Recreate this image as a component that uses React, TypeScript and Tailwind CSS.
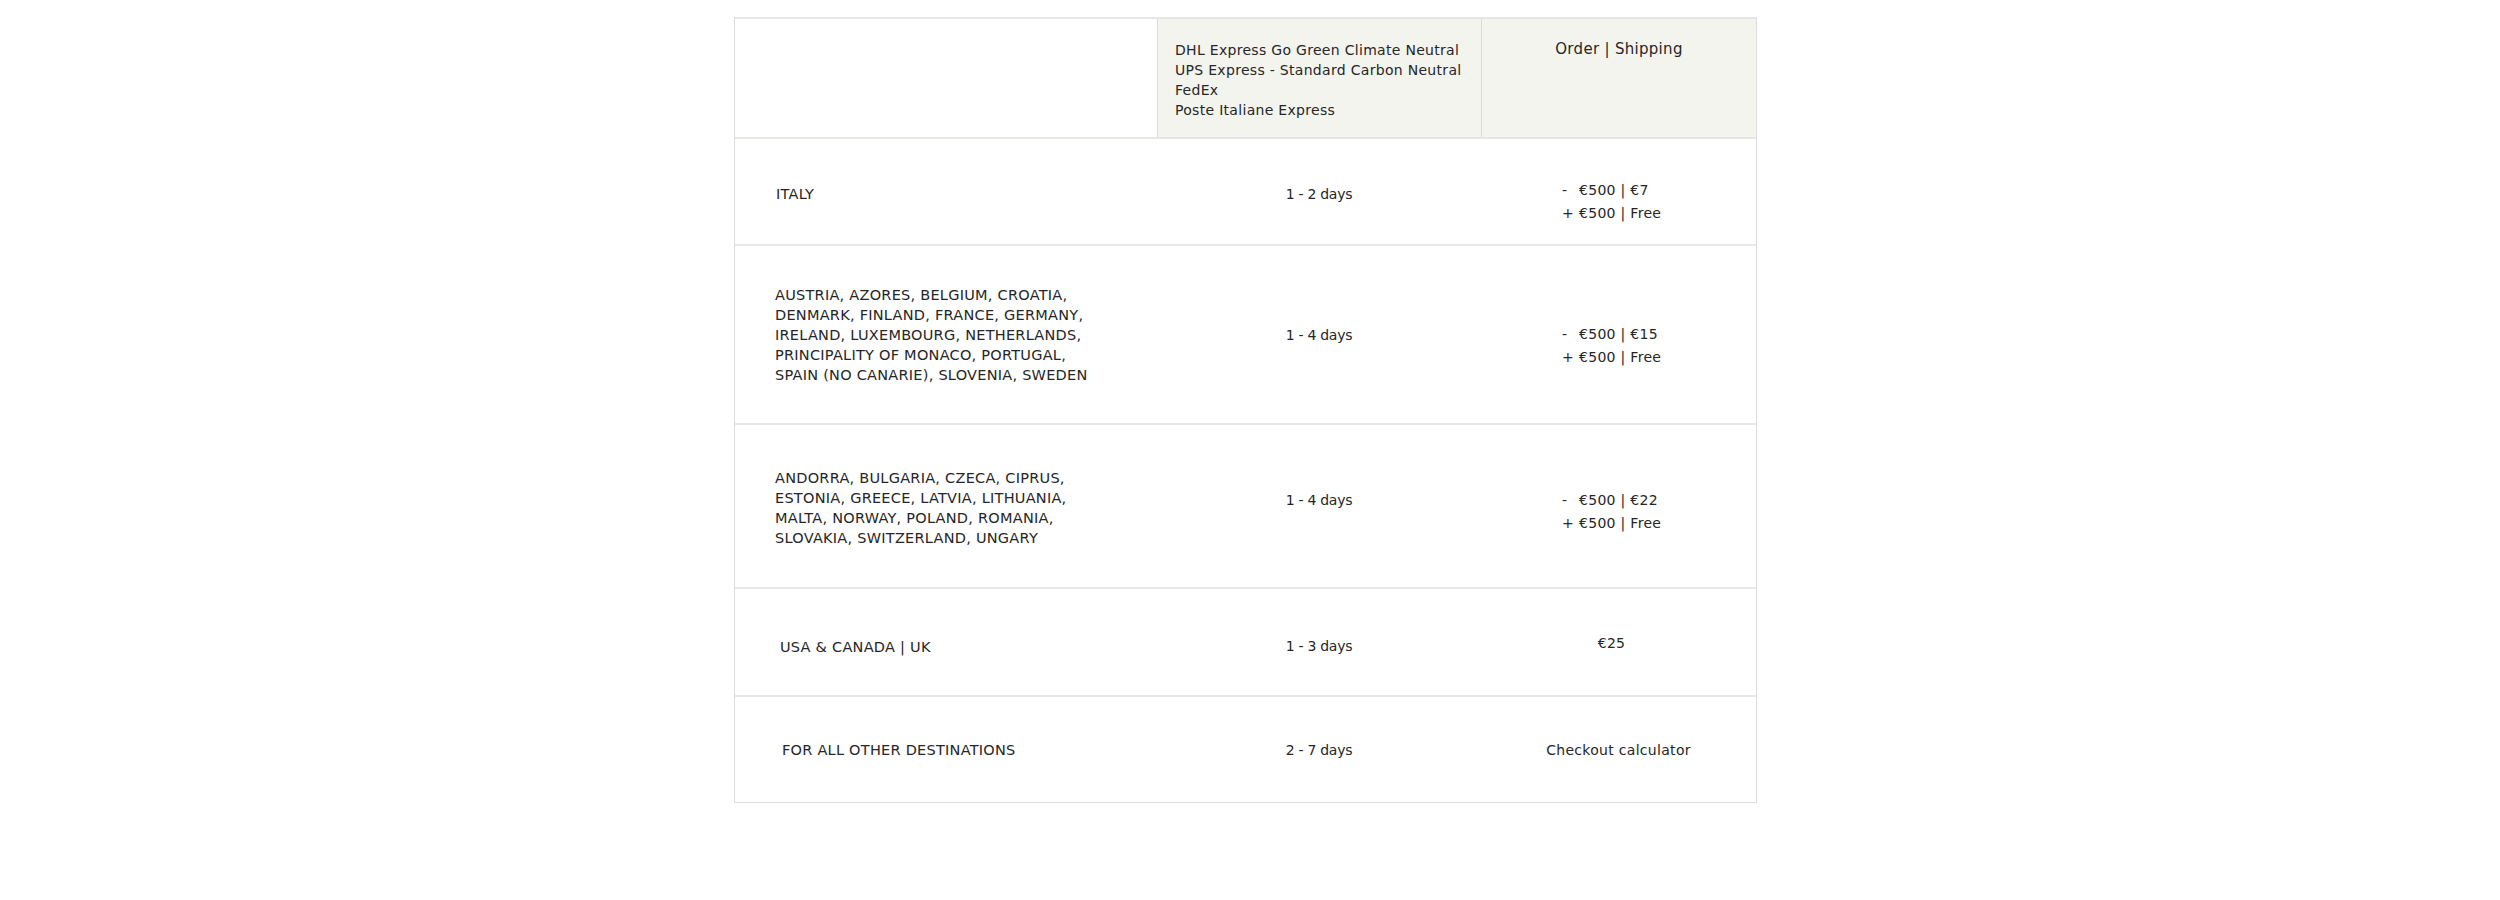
import type { ReactNode } from "react";

type Row = {
  h: string;
  dest: ReactNode;
  destCls: string;
  days: string;
  daysCls: string;
  cost: ReactNode;
  costCls: string;
  last?: boolean;
};

function Tier({ low }: { low: string }) {
  return (
    <div className="leading-[23px]">
      <div>
        <span className="inline-block w-[17px]">-</span>€500 | {low}
      </div>
      <div>
        <span className="inline-block w-[17px]">+</span>€500 | Free
      </div>
    </div>
  );
}

const ROWS: Row[] = [
  {
    h: "h-[107px]",
    dest: "ITALY",
    destCls: "pl-[41px] pt-[5px]",
    days: "1 - 2 days",
    daysCls: "pt-[5px]",
    cost: <Tier low="€7" />,
    costCls: "pl-[81px] pt-[20px]",
  },
  {
    h: "h-[179px]",
    dest: (
      <>
        AUSTRIA, AZORES, BELGIUM, CROATIA,
        <br />
        DENMARK, FINLAND, FRANCE, GERMANY,
        <br />
        IRELAND, LUXEMBOURG, NETHERLANDS,
        <br />
        PRINCIPALITY OF MONACO, PORTUGAL,
        <br />
        SPAIN (NO CANARIE), SLOVENIA, SWEDEN
      </>
    ),
    destCls: "pl-[40px]",
    days: "1 - 4 days",
    daysCls: "",
    cost: <Tier low="€15" />,
    costCls: "pl-[81px] pt-[22px]",
  },
  {
    h: "h-[164px]",
    dest: (
      <>
        ANDORRA, BULGARIA, CZECA, CIPRUS,
        <br />
        ESTONIA, GREECE, LATVIA, LITHUANIA,
        <br />
        MALTA, NORWAY, POLAND, ROMANIA,
        <br />
        SLOVAKIA, SWITZERLAND, UNGARY
      </>
    ),
    destCls: "pl-[40px] pt-[4px]",
    days: "1 - 4 days",
    daysCls: "pb-[13px]",
    cost: <Tier low="€22" />,
    costCls: "pl-[81px] pt-[11px]",
  },
  {
    h: "h-[108px]",
    dest: "USA & CANADA | UK",
    destCls: "pl-[45px] pt-[10px]",
    days: "1 - 3 days",
    daysCls: "pt-[8px]",
    cost: "€25",
    costCls: "justify-center pr-[14px] pt-[2px]",
  },
  {
    h: "h-[105px]",
    dest: "FOR ALL OTHER DESTINATIONS",
    destCls: "pl-[47px]",
    days: "2 - 7 days",
    daysCls: "",
    cost: "Checkout calculator",
    costCls: "justify-center",
    last: true,
  },
];

export default function App() {
  return (
    <div className="min-h-[900px] bg-white pt-[17px] font-['DejaVu_Sans',sans-serif] text-[14px] leading-[20px] tracking-[0.3px] text-[#262626]">
      <div className="ml-[734px] w-[1023px] border-x border-t-2 border-b border-x-[#dcdcdc] border-t-[#e6e6e6] border-b-[#dcdcdc]">
        {/* header */}
        <div className="flex h-[120px] border-b-2 border-[#e6e6e3]">
          <div className="w-[422px] bg-white" />
          <div className="w-[324px] border-l border-[#dcdcd6] bg-[#f4f4ef] pl-[17px] pt-[21px]">
            DHL Express Go Green Climate Neutral
            <br />
            UPS Express - Standard Carbon Neutral
            <br />
            FedEx
            <br />
            Poste Italiane Express
          </div>
          <div className="flex-1 border-l border-[#dcdcd6] bg-[#f4f4ef] pt-[20px] text-center text-[15px]">
            Order | Shipping
          </div>
        </div>

        {ROWS.map((r, i) => (
          <div
            key={i}
            className={`flex ${r.h} ${r.last ? "" : "border-b-2 border-[#e8e8e8]"}`}
          >
            <div className={`flex w-[422px] items-center text-[14.5px] tracking-[0.25px] ${r.destCls}`}>
              <div>{r.dest}</div>
            </div>
            <div className={`flex w-[324px] items-center justify-center tracking-[-0.3px] ${r.daysCls}`}>
              {r.days}
            </div>
            <div className={`flex flex-1 items-center ${r.costCls}`}>
              <div>{r.cost}</div>
            </div>
          </div>
        ))}
      </div>
    </div>
  );
}
